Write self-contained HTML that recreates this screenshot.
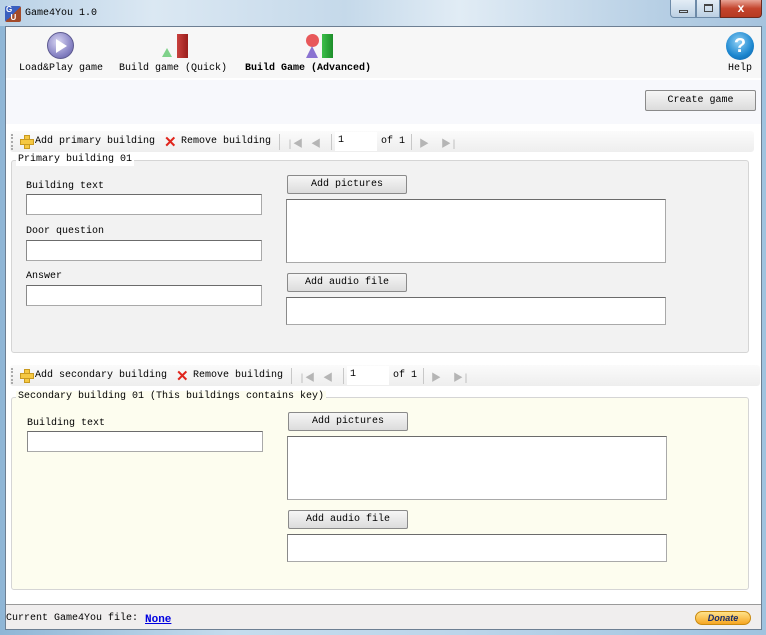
<!DOCTYPE html>
<html><head><meta charset="utf-8"><style>
*{margin:0;padding:0;box-sizing:border-box}
body{width:766px;height:635px;overflow:hidden;position:relative;font-family:"Liberation Mono","Noto Sans CJK SC",monospace;font-size:10px;color:#000;background:#fff}
.a{position:absolute}
.t{position:absolute;white-space:nowrap;line-height:12px}
.btn{position:absolute;border:1px solid #8a8a8a;border-radius:2px;background:linear-gradient(#f6f6f6,#dcdcdc);text-align:center;line-height:17px;font-size:10px}
.in{position:absolute;background:#fff;border:1px solid #a9a9a9;border-top-color:#6b6b6b;border-left-color:#8a8a8a}
.tb{position:absolute;background:linear-gradient(#fbfbfb,#eeeeee);border-radius:3px}
.sep{position:absolute;width:1px;height:16px;background:#c8c8c8}
.grp{position:absolute;border:1px solid #d5d5d5;border-radius:3px}
.plus{position:absolute;width:12px;height:12px}
.plus:before{content:"";position:absolute;left:4px;top:0;width:4px;height:12px;background:#f5c842;border:1px solid #c99a20}
.plus:after{content:"";position:absolute;left:0;top:4px;width:12px;height:4px;background:#f5c842;border:1px solid #c99a20}
.nav{position:absolute;color:#b5b5b5;font-size:10px}
</style></head><body>
<div class="a" style="left:0;top:0;width:766px;height:635px;background:linear-gradient(90deg,#8fb6d6,#c5dced 30%,#bcd5ea 60%,#9fc3df);"></div>
<div class="a" style="left:0;top:0;width:766px;height:26px;background:linear-gradient(90deg,#b9d1e6,#dbe8f3 20%,#c5d9ea 45%,#e1ecf5 60%,#b8d0e5 85%,#a5c3de)"></div>
<div class="a" style="left:5px;top:6px;width:16px;height:16px;background:linear-gradient(135deg,#3a5fbf 50%,#a24a2a 50%);border-radius:2px;color:#fff;font:bold 8px 'Liberation Sans',sans-serif;line-height:8px;padding-left:1px">G<br>&nbsp;&nbsp;U</div>
<div class="t" style="left:25px;top:8px">Game4You 1.0</div>
<div class="a" style="left:670px;top:0;width:26px;height:18px;border:1px solid #6d8aa8;border-top:none;border-radius:0 0 0 4px;background:linear-gradient(#e3edf6,#bcd0e3)"><div class="a" style="left:8px;top:10px;width:9px;height:3px;border:1px solid #444"></div></div>
<div class="a" style="left:696px;top:0;width:24px;height:18px;border:1px solid #6d8aa8;border-top:none;background:linear-gradient(#e3edf6,#bcd0e3)"><div class="a" style="left:7px;top:4px;width:9px;height:8px;border:1px solid #444;border-top-width:2px"></div></div>
<div class="a" style="left:720px;top:0;width:42px;height:18px;border:1px solid #6b2a20;border-top:none;border-radius:0 0 4px 0;background:linear-gradient(#e8a496,#c4442d 50%,#b53a22);color:#fff;font:bold 12px 'Liberation Sans',sans-serif;text-align:center;line-height:16px">x</div>
<div class="a" style="left:5px;top:26px;width:757px;height:604px;background:#fff;border:1px solid #6d7f93"></div>
<div class="a" style="left:6px;top:27px;width:755px;height:51px;background:#f7f7f7"></div>
<div class="a" style="left:47px;top:32px;width:27px;height:27px;border-radius:50%;background:radial-gradient(circle at 40% 35%,#d8d6f2,#8a86c6 60%,#5c58a0);border:1px solid #5d5a90"></div>
<div class="a" style="left:56px;top:39px;width:0;height:0;border-left:11px solid #fff;border-top:7px solid transparent;border-bottom:7px solid transparent"></div>
<div class="t" style="left:19px;top:63px">Load&amp;Play game</div>
<div class="a" style="left:162px;top:48px;width:0;height:0;border-left:5px solid transparent;border-right:5px solid transparent;border-bottom:9px solid #7fd18a"></div>
<div class="a" style="left:177px;top:34px;width:11px;height:24px;background:linear-gradient(90deg,#c9413e,#9a1e1c)"></div>
<div class="t" style="left:119px;top:63px">Build game (Quick)</div>
<div class="a" style="left:306px;top:34px;width:13px;height:13px;border-radius:50%;background:#e8585a"></div>
<div class="a" style="left:306px;top:46px;width:0;height:0;border-left:6px solid transparent;border-right:6px solid transparent;border-bottom:12px solid #8a73d1"></div>
<div class="a" style="left:322px;top:34px;width:11px;height:24px;background:linear-gradient(90deg,#3cbf4a,#1d8e2a)"></div>
<div class="t" style="left:245px;top:63px;font-weight:bold">Build Game (Advanced)</div>
<div class="a" style="left:726px;top:32px;width:28px;height:28px;border-radius:50%;background:radial-gradient(circle at 45% 35%,#8fd0f5,#1b86cf 60%,#0d5a9a);color:#fff;font:bold 20px 'Liberation Sans',sans-serif;text-align:center;line-height:28px">?</div>
<div class="t" style="left:728px;top:63px">Help</div>
<div class="a" style="left:6px;top:80px;width:755px;height:44px;background:#f7f8fc"></div>
<div class="btn" style="left:645px;top:90px;width:111px;height:21px;line-height:19px">Create game</div>
<div class="tb" style="left:10px;top:131px;width:744px;height:21px"></div>
<div class="a" style="left:11px;top:134px;width:2px;height:16px;border-left:2px dotted #aaa"></div>
<div class="plus" style="left:20px;top:135px"></div>
<div class="t" style="left:35px;top:136px">Add primary building</div>
<div class="t" style="left:164px;top:133px;color:#e0251c;font:bold 15px 'Liberation Sans',sans-serif">✕</div>
<div class="t" style="left:181px;top:136px">Remove building</div>
<div class="sep" style="left:279px;top:134px"></div>
<div class="nav" style="left:287px;top:135px">|◀</div>
<div class="nav" style="left:311px;top:135px">◀</div>
<div class="sep" style="left:331px;top:134px"></div>
<div class="a" style="left:335px;top:132px;width:42px;height:19px;background:#fff"></div>
<div class="t" style="left:338px;top:135px">1</div>
<div class="t" style="left:381px;top:136px">of 1</div>
<div class="sep" style="left:411px;top:134px"></div>
<div class="nav" style="left:419px;top:135px">▶</div>
<div class="nav" style="left:441px;top:135px">▶|</div>
<div class="grp" style="left:11px;top:160px;width:738px;height:193px;background:#f2f2f2"></div>
<div class="t" style="left:16px;top:154px;background:#fff;padding:0 2px">Primary building 01</div>
<div class="t" style="left:26px;top:181px">Building text</div>
<div class="in" style="left:26px;top:194px;width:236px;height:21px"></div>
<div class="t" style="left:26px;top:226px">Door question</div>
<div class="in" style="left:26px;top:240px;width:236px;height:21px"></div>
<div class="t" style="left:26px;top:271px">Answer</div>
<div class="in" style="left:26px;top:285px;width:236px;height:21px"></div>
<div class="btn" style="left:287px;top:175px;width:120px;height:19px">Add pictures</div>
<div class="in" style="left:286px;top:199px;width:380px;height:64px"></div>
<div class="btn" style="left:287px;top:273px;width:120px;height:19px">Add audio file</div>
<div class="in" style="left:286px;top:297px;width:380px;height:28px"></div>
<div class="tb" style="left:10px;top:365px;width:750px;height:21px"></div>
<div class="a" style="left:11px;top:368px;width:2px;height:16px;border-left:2px dotted #aaa"></div>
<div class="plus" style="left:20px;top:369px"></div>
<div class="t" style="left:35px;top:370px">Add secondary building</div>
<div class="t" style="left:176px;top:367px;color:#e0251c;font:bold 15px 'Liberation Sans',sans-serif">✕</div>
<div class="t" style="left:193px;top:370px">Remove building</div>
<div class="sep" style="left:291px;top:368px"></div>
<div class="nav" style="left:299px;top:369px">|◀</div>
<div class="nav" style="left:323px;top:369px">◀</div>
<div class="sep" style="left:343px;top:368px"></div>
<div class="a" style="left:347px;top:366px;width:42px;height:19px;background:#fff"></div>
<div class="t" style="left:350px;top:369px">1</div>
<div class="t" style="left:393px;top:370px">of 1</div>
<div class="sep" style="left:423px;top:368px"></div>
<div class="nav" style="left:431px;top:369px">▶</div>
<div class="nav" style="left:453px;top:369px">▶|</div>
<div class="grp" style="left:11px;top:397px;width:738px;height:193px;background:#fdfdef"></div>
<div class="t" style="left:16px;top:391px;background:#fdfdef;padding:0 2px">Secondary building 01 (This buildings contains key)</div>
<div class="t" style="left:27px;top:418px">Building text</div>
<div class="in" style="left:27px;top:431px;width:236px;height:21px"></div>
<div class="btn" style="left:288px;top:412px;width:120px;height:19px">Add pictures</div>
<div class="in" style="left:287px;top:436px;width:380px;height:64px"></div>
<div class="btn" style="left:288px;top:510px;width:120px;height:19px">Add audio file</div>
<div class="in" style="left:287px;top:534px;width:380px;height:28px"></div>
<div class="a" style="left:6px;top:604px;width:755px;height:25px;background:#f0eeee;border-top:1px solid #9a9a9a"></div>
<div class="t" style="left:6px;top:613px">Current Game4You file:</div>
<div class="t" style="left:145px;top:614px;color:#0000e0;font-weight:bold;text-decoration:underline;font-size:11px">None</div>
<div class="a" style="left:695px;top:611px;width:56px;height:14px;border-radius:7px;background:linear-gradient(#ffe38a,#f6a623);border:1px solid #c98a10;font:italic bold 9px 'Liberation Sans',sans-serif;color:#1a2d6b;text-align:center;line-height:12px">Donate</div>
</body></html>
